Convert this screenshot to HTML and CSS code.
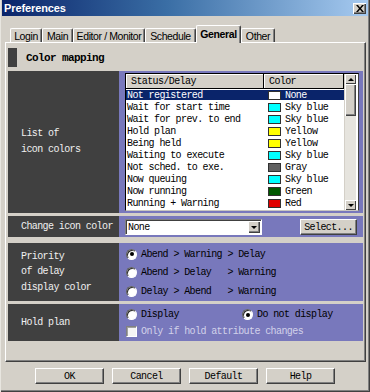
FILE: index.html
```html
<!DOCTYPE html>
<html>
<head>
<meta charset="utf-8">
<title>Preferences</title>
<link rel="stylesheet" href="styles.css">
</head>
<body>
<div class="window">
  <div class="titlebar">
    <span class="title">Preferences</span>
    <span class="close"><svg width="8" height="7" viewBox="0 0 8 7"><path d="M0 0h2l2 2.4L6 0h2L5 3.5 8 7H6L4 4.6 2 7H0l3-3.5z" fill="#000"/></svg></span>
  </div>
  <div class="tabs">
    <div class="tab t-login">Login</div>
    <div class="tab t-main">Main</div>
    <div class="tab t-editor">Editor / Monitor</div>
    <div class="tab t-schedule">Schedule</div>
    <div class="tab t-general active">General</div>
    <div class="tab t-other">Other</div>
  </div>
  <div class="panel">
    <div class="section-head"><span class="marker"></span><span class="section-title">Color mapping</span></div>

    <div class="row row-list">
      <div class="label">List of<br>icon colors</div>
      <div class="field field-list">
        <div class="listbox">
          <div class="table">
            <div class="thead">
              <div class="th th-status">Status/Delay</div>
              <div class="th th-color">Color</div>
            </div>
            <div class="item sel"><span class="c1">Not registered</span><span class="c2"><i class="sw white"></i>None</span></div>
            <div class="item"><span class="c1">Wait for start time</span><span class="c2"><i class="sw sky"></i>Sky blue</span></div>
            <div class="item"><span class="c1">Wait for prev. to end</span><span class="c2"><i class="sw sky"></i>Sky blue</span></div>
            <div class="item"><span class="c1">Hold plan</span><span class="c2"><i class="sw yellow"></i>Yellow</span></div>
            <div class="item"><span class="c1">Being held</span><span class="c2"><i class="sw yellow"></i>Yellow</span></div>
            <div class="item"><span class="c1">Waiting to execute</span><span class="c2"><i class="sw sky"></i>Sky blue</span></div>
            <div class="item"><span class="c1">Not sched. to exe.</span><span class="c2"><i class="sw gray"></i>Gray</span></div>
            <div class="item"><span class="c1">Now queuing</span><span class="c2"><i class="sw sky"></i>Sky blue</span></div>
            <div class="item"><span class="c1">Now running</span><span class="c2"><i class="sw green"></i>Green</span></div>
            <div class="item"><span class="c1">Running + Warning</span><span class="c2"><i class="sw red"></i>Red</span></div>
          </div>
          <div class="scrollbar">
            <div class="sb-btn"><i class="arrow-up"></i></div>
            <div class="sb-thumb"></div>
            <div class="sb-track"></div>
            <div class="sb-btn"><i class="arrow-down"></i></div>
          </div>
        </div>
      </div>
    </div>

    <div class="row row-change">
      <div class="label">Change icon color</div>
      <div class="field field-change">
        <div class="combo"><span class="combo-text">None</span><span class="combo-btn"><i class="arrow-down"></i></span></div>
        <div class="btn btn-select">Select...</div>
      </div>
    </div>

    <div class="row row-priority">
      <div class="label label-priority">Priority<br>of delay<br>display color</div>
      <div class="field field-radios">
        <div class="opt"><span class="radio on"></span><span class="opt-text">Abend &gt; Warning &gt; Delay</span></div>
        <div class="opt"><span class="radio"></span><span class="opt-text">Abend &gt; Delay&nbsp;&nbsp; &gt; Warning</span></div>
        <div class="opt"><span class="radio"></span><span class="opt-text">Delay &gt; Abend&nbsp;&nbsp; &gt; Warning</span></div>
      </div>
    </div>

    <div class="row row-hold">
      <div class="label">Hold plan</div>
      <div class="field field-hold">
        <div class="hold-line">
          <div class="opt opt-display"><span class="radio"></span><span class="opt-text">Display</span></div>
          <div class="opt"><span class="radio on"></span><span class="opt-text">Do not display</span></div>
        </div>
        <div class="opt"><span class="check"></span><span class="opt-text disabled">Only if hold attribute changes</span></div>
      </div>
    </div>
  </div>
  <div class="buttons">
    <div class="btn btn-main">OK</div>
    <div class="btn btn-main">Cancel</div>
    <div class="btn btn-main">Default</div>
    <div class="btn btn-main">Help</div>
  </div>
</div>
</body>
</html>
```

FILE: styles.css
```css
html, body {
  margin: 0;
  padding: 0;
  background: #d4d0c8;
}

body {
  width: 370px;
  height: 392px;
  overflow: hidden;
  font-family: "Liberation Mono", "DejaVu Sans Mono", monospace;
  font-size: 10px;
  letter-spacing: -0.6px;
  color: #000;
}

.window {
  width: 370px;
  height: 392px;
  box-sizing: border-box;
  padding: 0 2px 3px 2px;
  background: #d4d0c8;
  box-shadow: inset 1px 0 #e8e6e0, inset -1px -1px #404040, inset -2px -2px #808080;
  display: flex;
  flex-direction: column;
}

.titlebar {
  height: 16px;
  flex: none;
  display: flex;
  align-items: center;
  justify-content: space-between;
  padding: 0 2px 0 2px;
  background: linear-gradient(to right, #0a246a, #3a6ea5 45%, #a6caf0);
}

.title {
  font-family: "Liberation Sans", Arial, sans-serif;
  font-weight: bold;
  font-size: 11px;
  letter-spacing: -0.1px;
  color: #fff;
}

.close {
  width: 13px;
  height: 11px;
  box-sizing: border-box;
  background: #d4d0c8;
  box-shadow: inset 1px 1px #fff, inset -1px -1px #404040, inset -2px -2px #808080;
  display: flex;
  align-items: center;
  justify-content: center;
}

.tabs {
  margin-top: 9px;
  height: 17px;
  flex: none;
  display: flex;
  align-items: flex-end;
  padding-left: 8px;
  font-family: "Liberation Sans", Arial, sans-serif;
  font-size: 10.5px;
  letter-spacing: -0.4px;
}

.tab {
  height: 14px;
  box-sizing: border-box;
  display: flex;
  align-items: center;
  justify-content: center;
  border-top: 1px solid #fff;
  border-left: 1px solid #fff;
  border-right: 1px solid #404040;
  box-shadow: inset -1px 0 #808080;
  border-radius: 2px 2px 0 0;
  background: #d4d0c8;
}

.t-login { width: 32px; }
.t-main { width: 31px; }
.t-editor { width: 72px; }
.t-schedule { width: 51px; }
.t-general { width: 45px; }
.t-other { width: 34px; }

.tab.active {
  height: 18px;
  margin-bottom: -1px;
  position: relative;
  z-index: 1;
  font-weight: bold;
  padding-bottom: 2px;
}

.panel {
  margin: 0 2px 0 3px;
  height: 320px;
  flex: none;
  box-sizing: border-box;
  border-top: 1px solid #fff;
  border-left: 1px solid #fff;
  border-right: 1px solid #404040;
  border-bottom: 1px solid #404040;
  box-shadow: inset -1px -1px #808080;
  padding: 0 2px 0 2px;
}

.section-head {
  margin-top: 5px;
  height: 19px;
  display: flex;
  align-items: center;
}

.marker {
  width: 9px;
  height: 19px;
  background: #404040;
}

.section-title {
  margin-left: 9px;
  font-weight: bold;
  font-size: 11px;
  letter-spacing: -0.6px;
}

.row {
  display: grid;
  grid-template-columns: 111px 1fr;
}

.row-list { margin-top: 4px; height: 142px; }
.row-change { margin-top: 3px; height: 21px; }
.row-priority { margin-top: 6px; height: 58px; }
.row-hold { margin-top: 3px; height: 37px; }

.label {
  background: #404040;
  color: #f0f0f0;
  display: flex;
  align-items: center;
  padding-left: 13px;
  line-height: 16px;
}

.label-priority { line-height: 15.3px; }

.field {
  background: #7878bc;
}

.field-list {
  padding: 2px 4px 2px 6px;
}

.listbox {
  height: 138px;
  box-sizing: border-box;
  border: 1px solid;
  border-color: #000 #404040 #c8c6c0 #000;
  display: flex;
  background: #fff;
}

.table {
  width: 218px;
  flex: none;
}

.thead {
  height: 15px;
  box-sizing: border-box;
  display: flex;
  border-bottom: 1px solid #000;
  border-right: 1px solid #000;
}

.th {
  background: #d4d0c8;
  box-shadow: inset 1px 1px #fff;
  display: flex;
  align-items: center;
  padding-left: 5px;
  box-sizing: border-box;
}

.th-status {
  width: 138px;
  border-right: 1px solid #000;
}

.th-color {
  flex: 1;
}

.item {
  height: 12.1px;
  display: flex;
  align-items: center;
}

.item.sel {
  background: linear-gradient(transparent 1px, #0a246a 1px, #0a246a 11px, transparent 11px);
  color: #fff;
}

.c1 {
  width: 138px;
  padding-left: 1px;
  box-sizing: border-box;
  white-space: pre;
}

.c2 {
  display: flex;
  align-items: center;
}

.sw {
  width: 13px;
  height: 9px;
  box-sizing: border-box;
  border: 1px solid #303030;
  margin: 0 4px 0 4px;
}

.sw.white { background: #fff; }
.sw.sky { background: #00ffff; }
.sw.yellow { background: #ffff00; }
.sw.gray { background: #606060; }
.sw.green { background: #005800; }
.sw.red { background: #e00000; }

.scrollbar {
  width: 12px;
  flex: none;
  display: flex;
  flex-direction: column;
  border-left: 1px solid #d4d0c8;
  box-sizing: border-box;
}

.sb-btn {
  height: 10px;
  flex: none;
  background: #d4d0c8;
  box-shadow: inset 1px 1px #fff, inset -1px -1px #404040;
  display: flex;
  align-items: center;
  justify-content: center;
}

.sb-thumb {
  height: 32px;
  flex: none;
  background: #d4d0c8;
  box-shadow: inset 1px 1px #fff, inset -1px -1px #404040, inset -2px -2px #808080;
}

.sb-track {
  flex: 1;
  background: #e6e4de;
}

.arrow-up {
  width: 0;
  height: 0;
  border-left: 3px solid transparent;
  border-right: 3px solid transparent;
  border-bottom: 3px solid #000;
}

.arrow-down {
  width: 0;
  height: 0;
  border-left: 3px solid transparent;
  border-right: 3px solid transparent;
  border-top: 3px solid #000;
}

.field-change {
  display: flex;
  align-items: center;
  justify-content: space-between;
  padding: 0 6px 0 6px;
}

.combo {
  width: 137px;
  height: 16px;
  box-sizing: border-box;
  background: #fff;
  border: 1px solid;
  border-color: #808080 #fff #fff #808080;
  box-shadow: inset 1px 1px #404040;
  display: flex;
  align-items: center;
  justify-content: space-between;
  padding: 1px 1px 0 2px;
}

.combo-btn {
  width: 12px;
  height: 12px;
  box-sizing: border-box;
  background: #d4d0c8;
  box-shadow: inset 1px 1px #fff, inset -1px -1px #404040, inset -2px -2px #808080;
  display: flex;
  align-items: center;
  justify-content: center;
}

.btn {
  box-sizing: border-box;
  background: #d4d0c8;
  border: 1px solid;
  border-color: #fff #404040 #404040 #fff;
  box-shadow: inset -1px -1px #808080;
  display: flex;
  align-items: center;
  justify-content: center;
}

.btn-select {
  width: 57px;
  height: 16px;
  margin-top: 1px;
}

.field-radios {
  padding: 2px 0 0 7px;
}

.opt {
  height: 18.5px;
  display: flex;
  align-items: center;
}

.radio {
  width: 11px;
  height: 11px;
  box-sizing: border-box;
  border-radius: 50%;
  background: #fff;
  border: 1px solid;
  border-color: #606060 #fff #fff #606060;
  box-shadow: inset 1px 1px #303030;
  position: relative;
  flex: none;
}

.radio.on::after {
  content: "";
  position: absolute;
  left: 2.5px;
  top: 2.5px;
  width: 4px;
  height: 4px;
  border-radius: 50%;
  background: #000;
}

.opt-text {
  margin-left: 4px;
  white-space: pre;
}

.field-hold {
  padding: 2px 0 0 7px;
}

.field-hold .opt {
  height: 17px;
}

.hold-line {
  display: flex;
}

.opt-display {
  width: 116px;
}

.check {
  width: 11px;
  height: 11px;
  box-sizing: border-box;
  background: #f4f4f4;
  border: 1px solid;
  border-color: #808080 #fff #fff #808080;
  box-shadow: inset 1px 1px #a0a0a0;
  flex: none;
}

.disabled {
  color: #d2d2ea;
}

.buttons {
  margin-top: 6px;
  display: flex;
  justify-content: center;
  gap: 8px;
}

.btn-main {
  width: 69px;
  height: 16px;
}
```
